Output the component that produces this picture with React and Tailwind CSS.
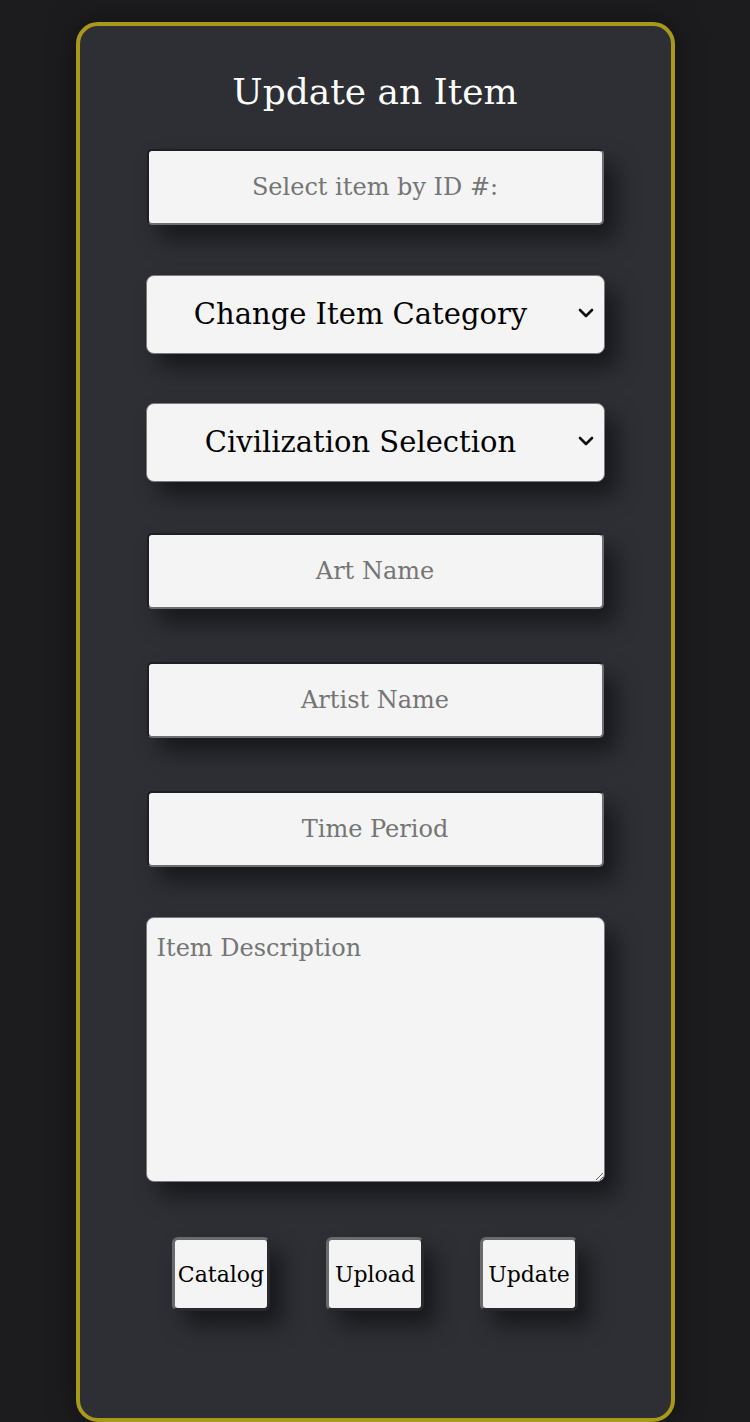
import React from 'react'

const inputCls =
  'block w-[457px] h-[76px] rounded-[5px] bg-[#f4f4f4] text-center text-[24px] text-black placeholder:text-[#757575] ' +
  'border-2 border-t-[#1f1f22] border-l-[#1f1f22] border-b-[#6e6e6e] border-r-[#6e6e6e] ' +
  'shadow-[12px_14px_22px_rgba(0,0,0,0.5)] outline-none'

const selectCls =
  'block w-[459px] h-[79px] appearance-none rounded-[8px] bg-[#f4f4f4] border border-[#7a7a7a] text-black text-[29px] ' +
  'pl-2 pr-[37px] [text-align-last:center] shadow-[12px_14px_22px_rgba(0,0,0,0.5)] outline-none'

const Chevron = () => (
  <svg className="pointer-events-none absolute right-[10px] top-[32px] w-[18px] h-[12px]" viewBox="0 0 18 12" fill="none">
    <path d="M3 3 L9 9 L15 3" stroke="#111" strokeWidth="2.6" strokeLinecap="round" strokeLinejoin="round" />
  </svg>
)

const SelectBox = ({ label, className }) => (
  <div className={`relative ${className}`}>
    <select className={selectCls} defaultValue="">
      <option value="">{label}</option>
    </select>
    <Chevron />
  </div>
)

const Btn = ({ children }) => (
  <button className="w-[98px] h-[74px] rounded-[6px] bg-[#f4f4f4] text-black text-[22px] border-[3px] border-t-[#6a6a6a] border-l-[#6a6a6a] border-b-[#2a2a2e] border-r-[#2a2a2e] shadow-[12px_14px_22px_rgba(0,0,0,0.5)]">
    {children}
  </button>
)

export default function App() {
  return (
    <div className="min-h-[1422px] w-full bg-[#1c1c1e] pt-[22px] font-['DejaVu_Serif','Liberation_Serif',serif]">
      <div className="mx-auto w-[599px] h-[1400px] rounded-[22px] border-4 border-[#a8991a] bg-[#2e2f35] shadow-[0_0_30px_rgba(0,0,0,0.4)] flex flex-col items-center">
        <h1 className="mt-[40px] text-[36px] leading-[52px] text-white">Update an Item</h1>
        <input className={`${inputCls} mt-[31px]`} placeholder="Select item by ID #:" />
        <SelectBox className="mt-[50px]" label="Change Item Category" />
        <SelectBox className="mt-[49px]" label="Civilization Selection" />
        <input className={`${inputCls} mt-[51px]`} placeholder="Art Name" />
        <input className={`${inputCls} mt-[53px]`} placeholder="Artist Name" />
        <input className={`${inputCls} mt-[53px]`} placeholder="Time Period" />
        <textarea
          className="mt-[50px] block w-[459px] h-[265px] resize-y rounded-[8px] bg-[#f4f4f4] border border-[#7a7a7a] px-[10px] py-[12px] text-[24px] text-black placeholder:text-[#757575] shadow-[12px_14px_22px_rgba(0,0,0,0.5)] outline-none"
          placeholder="Item Description"
        />
        <div className="mt-[55px] flex justify-center gap-[56px]">
          <Btn>Catalog</Btn>
          <Btn>Upload</Btn>
          <Btn>Update</Btn>
        </div>
      </div>
    </div>
  )
}
